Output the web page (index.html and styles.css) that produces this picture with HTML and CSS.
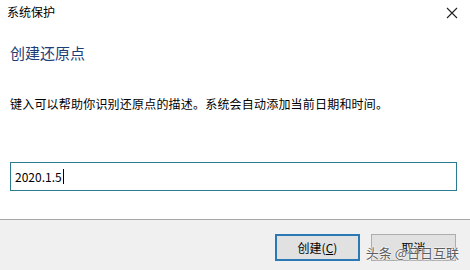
FILE: index.html
```html
<!DOCTYPE html>
<html lang="zh-CN">
<head>
  <meta charset="utf-8">
  <title>系统保护</title>
  <link rel="stylesheet" href="styles.css">
</head>
<body>
  <div class="dialog">
    <div class="titlebar">
      <span class="title">系统保护</span>
      <span class="close">
        <svg width="12" height="12" viewBox="0 0 12 12"><path d="M1 1L11 11M11 1L1 11" stroke="#222" stroke-width="1.1"/></svg>
      </span>
    </div>
    <div class="content">
      <h1>创建还原点</h1>
      <p class="desc">键入可以帮助你识别还原点的描述。系统会自动添加当前日期和时间。</p>
      <div class="field"><span class="value">2020.1.5</span><span class="caret"></span></div>
    </div>
    <div class="footer">
      <button class="btn primary">创建(<u>C</u>)</button>
      <button class="btn">取消</button>
      <span class="watermark">头条 @日日互联</span>
    </div>
  </div>
</body>
</html>
```

FILE: styles.css
```css
html, body {
  margin: 0;
  background: #fff;
}
body {
  font-family: "Microsoft YaHei", "Noto Sans CJK SC", sans-serif;
  font-size: 12px;
  color: #000;
}
.dialog {
  width: 470px;
  height: 270px;
  display: flex;
  flex-direction: column;
  position: relative;
}
.titlebar {
  height: 26px;
  display: flex;
  align-items: center;
  justify-content: space-between;
  padding: 0 12px 0 7px;
}
.title {
  font-size: 12px;
  line-height: 14px;
  margin-top: -2px;
}
.close {
  display: flex;
}
.content {
  flex: 1;
  padding: 0 10px;
}
.content h1 {
  margin: 17px 0 0;
  font-size: 15px;
  font-weight: normal;
  color: #1e3c78;
  line-height: 20px;
}
.desc {
  margin: 33px 0 0;
  line-height: 16px;
  letter-spacing: 0.2px;
}
.field {
  margin-top: 50px;
  width: 447px;
  height: 29px;
  box-sizing: border-box;
  border: 1px solid #2c7a90;
  display: flex;
  align-items: center;
  padding-left: 4px;
}
.caret {
  width: 1px;
  height: 15px;
  background: #000;
  margin-left: 1px;
}
.footer {
  height: 51px;
  background: #f0f0f0;
  border-top: 1px solid #a7a7a7;
  display: flex;
  justify-content: flex-end;
  align-items: flex-start;
  gap: 11px;
  padding: 14px 14px 0 0;
  box-sizing: border-box;
  position: relative;
}
.btn {
  width: 85px;
  height: 27px;
  background: #e1e1e1;
  border: 1px solid #adadad;
  font-family: inherit;
  font-size: 12px;
  color: #000;
  padding: 0;
}
.btn.primary {
  border: 2px solid #2a78b4;
}
.watermark {
  position: absolute;
  right: 11px;
  top: 24px;
  font-size: 13px;
  line-height: 17px;
  color: #5e5e5e;
  text-shadow: 0 0 2px #fff, 0 0 2px #fff, 0 0 1px #fff;
}
```
